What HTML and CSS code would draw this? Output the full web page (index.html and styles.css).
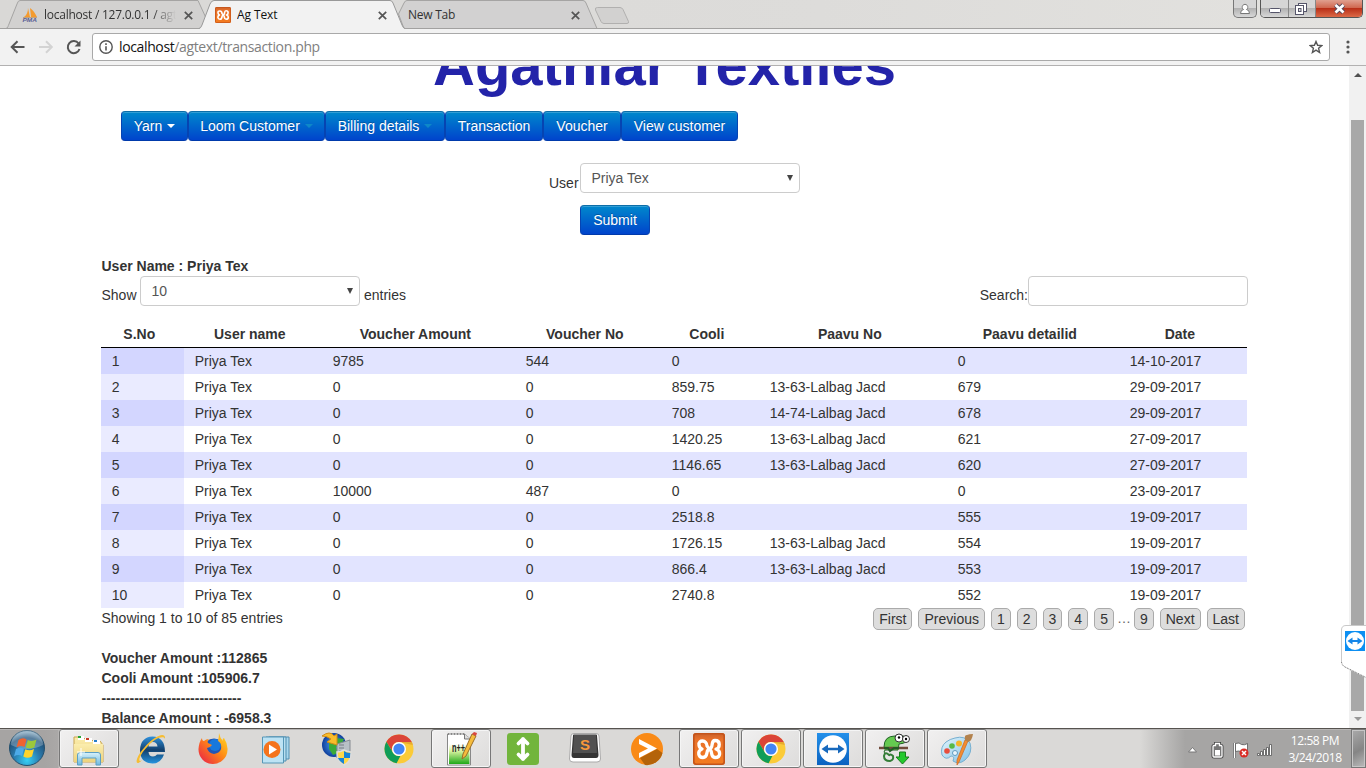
FILE: index.html
```html
<!DOCTYPE html>
<html lang="en">
<head>
<meta charset="utf-8">
<title>Ag Text</title>
<link rel="stylesheet" href="styles.css">
</head>
<body>
<svg width="0" height="0" class="defs">
  <defs>
    <linearGradient id="orange" x1="0" y1="0" x2="0" y2="1"><stop offset="0" stop-color="#c9602a"/><stop offset=".2" stop-color="#e8712a"/><stop offset="1" stop-color="#f47c20"/></linearGradient>
    <radialGradient id="orb" cx=".5" cy=".85" r=".8"><stop offset="0" stop-color="#35d0f5"/><stop offset=".45" stop-color="#2a7db0"/><stop offset=".8" stop-color="#22547c"/><stop offset="1" stop-color="#7fa4bd"/></radialGradient>
    <linearGradient id="folder" x1="0" y1="0" x2="0" y2="1"><stop offset="0" stop-color="#fbedae"/><stop offset="1" stop-color="#edd27c"/></linearGradient>
    <linearGradient id="glass" x1="0" y1="0" x2="0" y2="1"><stop offset="0" stop-color="#d7f1fb"/><stop offset="1" stop-color="#6fb9de"/></linearGradient>
    <linearGradient id="ieblue" x1="0" y1="0" x2="0" y2="1"><stop offset="0" stop-color="#2e91dd"/><stop offset=".5" stop-color="#123f6c"/><stop offset="1" stop-color="#2494e0"/></linearGradient>
    <linearGradient id="fox" x1="1" y1="0" x2="0" y2="1"><stop offset="0" stop-color="#ffe226"/><stop offset=".45" stop-color="#ff8a16"/><stop offset="1" stop-color="#e8174c"/></linearGradient>
    <radialGradient id="globe"><stop offset="0" stop-color="#4aa5f3"/><stop offset="1" stop-color="#103f9d"/></radialGradient>
    <linearGradient id="npp" x1="0" y1="0" x2="0" y2="1"><stop offset="0" stop-color="#fff"/><stop offset=".35" stop-color="#d9f3a0"/><stop offset="1" stop-color="#1fa818"/></linearGradient>
    <linearGradient id="tv" x1="0" y1="0" x2="0" y2="1"><stop offset="0" stop-color="#2390ea"/><stop offset="1" stop-color="#0b62c0"/></linearGradient>
    <linearGradient id="palette" x1="0" y1="0" x2="1" y2="1"><stop offset="0" stop-color="#e2f5fd"/><stop offset="1" stop-color="#82c1e6"/></linearGradient>
    <symbol id="chrome" viewBox="0 0 40 40">
      <circle cx="20" cy="20" r="14.500" fill="#fbcb38"/>
      <path d="M7.400 12.800A14.500 14.500 0 0 1 32.800 13H20a7 7 0 0 0-6.100 10.500Z" fill="#db4437"/>
      <path d="M7.400 12.800 13.900 23.500A7 7 0 0 0 21.500 26.800L17.600 34.300A14.500 14.500 0 0 1 7.400 12.800Z" fill="#0f9d58"/>
      <path d="M20 13H32.900A14.500 14.500 0 0 1 33.800 16L20 13Z" fill="#e8aa2d"/>
      <circle cx="20" cy="20" r="7" fill="#fff"/><circle cx="20" cy="20" r="5.600" fill="#4285f4"/>
    </symbol>
    <symbol id="xampp" viewBox="0 0 32 32">
      <rect width="32" height="32" rx="3" fill="url(#orange)"/>
      <rect x=".8" y=".8" width="30.400" height="30.400" rx="2.500" fill="none" stroke="#c4541a" stroke-width="1.600"/>
      <path d="M14 13C14 6.500 5 6.500 6 12 6.300 15 9 16 9 16 4 18 5 24.500 10 24.500 15 24.500 13 19 15 17L18 15C20 13 18 7.500 22 7.500 28 7.500 27 15 23 16 28 17.500 28 24.500 22 24.500 18 24.500 19 20 18 18Z" fill="none" stroke="#fff" stroke-width="3.300" stroke-linejoin="round"/>
    </symbol>
    <symbol id="arrows" viewBox="0 0 32 32">
      <circle cx="16" cy="16" r="13.800" fill="#fff"/>
      <path d="M4.500 16l6.500-4.500v3.300h10v-3.300l6.500 4.500-6.500 4.500v-3.300H11v3.300Z" fill="#1769bd"/>
    </symbol>
  </defs>
</svg>

<header class="titlebar">
  <svg class="tab-shapes" width="640" height="29" viewBox="0 0 640 29">
    <path d="M6 28.500C8 28 8 26 9 24L17 4Q18 .5 20 .5H198L206 18 202 28.500Z" fill="#d2d1d0" stroke="#a5a4a3"/>
    <path d="M398.500 14 404 3Q405 .5 407 .5H583Q585 .5 586 3L597 28.500H404Z" fill="#d2d1d1" stroke="#a5a4a3"/>
    <path d="M0 28.500H640" stroke="#a2a1a0"/>
    <path d="M199 29Q201 28 202 25L210 4Q211.500 .5 214 .5H390Q392 .5 393 3L402 25Q403 28 405 29Z" fill="#f2f2f2"/>
    <path d="M199 28.500Q201 28 202 25L210 4Q211.500 .5 214 .5H390Q392 .5 393 3L402 25Q403 28 405 28.500" fill="none" stroke="#999"/>
    <path d="M597.500 7.500H620Q622 7.500 623 9.500L628.500 21.500Q629 23.500 627 23.500H604Q602 23.500 601 21.500L595.500 10Q594.500 7.500 597.500 7.500Z" fill="#d2d1d0" stroke="#b1b0af"/>
  </svg>
  <div class="tab tab-pma">
    <svg class="pma" width="16" height="17" viewBox="0 0 16 17"><path d="M2 10C5 8 6 4 6 1l2 9ZM8 1c3 2 5 5 7 9H9Z" fill="#f49b2f"/><path d="M1 10.500H15" stroke="#c5a37b"/><text x=".5" y="15.300" font-size="6" font-weight="bold" font-style="italic" textLength="14.500" lengthAdjust="spacingAndGlyphs" fill="#5b5f95">PMA</text></svg>
    <span class="tab-title fade">localhost / 127.0.0.1 / agt</span>
    <svg class="x" width="9" height="9" viewBox="0 0 9 9"><path d="M.8.8l7.400 7.400M8.200.8.800 8.200"/></svg>
  </div>
  <div class="tab tab-active">
    <svg width="16" height="16"><use href="#xampp"/></svg>
    <span class="tab-title">Ag Text</span>
    <svg class="x" width="9" height="9" viewBox="0 0 9 9"><path d="M.8.8l7.400 7.400M8.200.8.800 8.200"/></svg>
  </div>
  <div class="tab tab-new">
    <span class="tab-title">New Tab</span>
    <svg class="x" width="9" height="9" viewBox="0 0 9 9"><path d="M.8.8l7.400 7.400M8.200.8.800 8.200"/></svg>
  </div>
  <div class="window-buttons">
    <div class="wb user"><svg width="12" height="12" viewBox="0 0 12 12"><path d="M1.500 10.500Q1.500 7 4.500 6.500A2.800 2.800 0 1 1 7.500 6.500Q10.500 7 10.500 10.500Z" fill="#fff" stroke="#777"/></svg></div>
    <div class="wb-group">
      <div class="wb min"><svg width="12" height="6"><rect x=".5" y=".5" width="11" height="4" rx="1" fill="#fff" stroke="#55556a"/></svg></div>
      <div class="wb max"><svg width="12" height="12" viewBox="0 0 12 12"><rect x="3.500" y=".5" width="8" height="8" fill="#fff" stroke="#55556a"/><rect x=".5" y="2.500" width="8" height="9" fill="#fff" stroke="#55556a"/><rect x="3.500" y="5.500" width="2.500" height="3" fill="#ddd" stroke="#55556a"/></svg></div>
      <div class="wb close"><svg width="13" height="11" viewBox="0 0 13 11"><path d="M2.500 2l8 7.500M10.500 2l-8 7.500" stroke="#55485a" stroke-width="4.500"/><path d="M2.500 2l8 7.500M10.500 2l-8 7.500" stroke="#fff" stroke-width="2.700"/></svg></div>
    </div>
  </div>
</header>

<div class="toolbar">
  <svg class="nav" width="72" height="16" viewBox="0 0 72 16" fill="none" stroke-width="2">
    <path d="M14.500 8H2M7.500 2.200 1.700 8l5.800 5.800" stroke="#555"/>
    <path d="M29 8h12.500M36 2.200 41.800 8 36 13.800" stroke="#d3d3d3"/>
    <path d="M68.600 4.500A6 6 0 1 0 69.500 10" stroke="#555"/><path d="M70.500 1.500V7.500H64.500Z" fill="#555"/>
  </svg>
  <div class="omnibox">
    <svg width="14" height="14" viewBox="0 0 14 14"><circle cx="7" cy="7" r="6.200" fill="none" stroke="#555" stroke-width="1.400"/><path d="M7 6.200V10.500M7 3.300V4.900" stroke="#555" stroke-width="1.600"/></svg>
    <span class="url">localhost<span>/agtext/transaction.php</span></span>
    <svg class="star" width="14" height="14" viewBox="0 0 14 14"><path d="M7 1.500 8.600 5.300 12.800 5.600 9.600 8.300 10.600 12.500 7 10.200 3.400 12.500 4.400 8.300 1.200 5.600 5.400 5.300Z" fill="none" stroke="#555" stroke-width="1.400"/></svg>
  </div>
  <svg class="dots" width="4" height="14" viewBox="0 0 4 14" fill="#555"><circle cx="2" cy="2" r="1.600"/><circle cx="2" cy="7" r="1.600"/><circle cx="2" cy="12" r="1.600"/></svg>
</div>

<div class="viewport">
  <main class="page">
    <h1 class="brand">Agathiar Textiles</h1>
    <nav class="menu">
      <a class="btn w-yarn">Yarn<i class="caret"></i></a><a class="btn w-loom">Loom Customer<i class="caret dim"></i></a><a class="btn w-bill">Billing details<i class="caret dim"></i></a><a class="btn w-trans">Transaction</a><a class="btn w-vouch">Voucher</a><a class="btn w-view">View customer</a>
    </nav>
    <form class="user-form">
      <label>User</label>
      <div class="select">Priya Tex<i class="tri"></i></div>
      <button type="button" class="btn submit">Submit</button>
    </form>
    <section class="report">
      <b class="user-name">User Name : Priya Tex</b>
      <div class="controls">
        <span class="show">Show</span><div class="select">10<i class="tri"></i></div><span class="entries">entries</span>
        <span class="search">Search:</span><input class="field" type="text">
      </div>
      <table class="grid">
        <colgroup><col class="c1"><col class="c2"><col class="c3"><col class="c4"><col class="c5"><col class="c6"><col class="c7"><col class="c8"></colgroup>
        <thead><tr><th>S.No</th><th>User name</th><th>Voucher Amount</th><th>Voucher No</th><th>Cooli</th><th>Paavu No</th><th>Paavu detailid</th><th>Date</th></tr></thead>
        <tbody>
          <tr><td>1</td><td>Priya Tex</td><td>9785</td><td>544</td><td>0</td><td></td><td>0</td><td>14-10-2017</td></tr>
          <tr><td>2</td><td>Priya Tex</td><td>0</td><td>0</td><td>859.75</td><td>13-63-Lalbag Jacd</td><td>679</td><td>29-09-2017</td></tr>
          <tr><td>3</td><td>Priya Tex</td><td>0</td><td>0</td><td>708</td><td>14-74-Lalbag Jacd</td><td>678</td><td>29-09-2017</td></tr>
          <tr><td>4</td><td>Priya Tex</td><td>0</td><td>0</td><td>1420.25</td><td>13-63-Lalbag Jacd</td><td>621</td><td>27-09-2017</td></tr>
          <tr><td>5</td><td>Priya Tex</td><td>0</td><td>0</td><td>1146.65</td><td>13-63-Lalbag Jacd</td><td>620</td><td>27-09-2017</td></tr>
          <tr><td>6</td><td>Priya Tex</td><td>10000</td><td>487</td><td>0</td><td></td><td>0</td><td>23-09-2017</td></tr>
          <tr><td>7</td><td>Priya Tex</td><td>0</td><td>0</td><td>2518.8</td><td></td><td>555</td><td>19-09-2017</td></tr>
          <tr><td>8</td><td>Priya Tex</td><td>0</td><td>0</td><td>1726.15</td><td>13-63-Lalbag Jacd</td><td>554</td><td>19-09-2017</td></tr>
          <tr><td>9</td><td>Priya Tex</td><td>0</td><td>0</td><td>866.4</td><td>13-63-Lalbag Jacd</td><td>553</td><td>19-09-2017</td></tr>
          <tr><td>10</td><td>Priya Tex</td><td>0</td><td>0</td><td>2740.8</td><td></td><td>552</td><td>19-09-2017</td></tr>
        </tbody>
      </table>
      <div class="table-foot">
        <span>Showing 1 to 10 of 85 entries</span>
        <div class="pager"><a>First</a><a>Previous</a><a>1</a><a>2</a><a>3</a><a>4</a><a>5</a><span>…</span><a>9</a><a>Next</a><a>Last</a></div>
      </div>
      <div class="totals">
        <div>Voucher Amount :112865</div>
        <div>Cooli Amount :105906.7</div>
        <div>------------------------------</div>
        <div>Balance Amount : -6958.3</div>
      </div>
    </section>
  </main>
  <div class="scrollbar"><i class="arrow up"></i><div class="thumb"></div><i class="arrow down"></i></div>
  <svg class="tv-tab" width="25" height="54" viewBox="0 0 25 54"><path d="M26 .5H5Q.5.5.5 5V37Q.5 40 4 42L26 53Z" fill="#fff" stroke="#c9c9c9"/><path d="M.5 37Q.5 40 4 42L26 53" fill="none" stroke="#777" stroke-dasharray="1 2"/><rect x="4" y="6" width="20" height="20" fill="#0d8ff2"/><circle cx="14" cy="16" r="9" fill="#fff"/><path d="M6.500 16l5-3.500v2.500h5v-2.500l5 3.500-5 3.500V17h-5v2.500Z" fill="#1686e8"/></svg>
</div>

<footer class="taskbar">
  <div class="start"><svg width="40" height="38" viewBox="0 0 40 38"><circle cx="20" cy="19" r="17.500" fill="url(#orb)" stroke="#24506e"/><path d="M4 16a16 15 0 0 1 32 0Q20 24 4 16Z" fill="#fff" opacity=".25"/><path d="M11.500 11Q15.500 8 19.500 10.500L17.500 18Q13.500 16 9.500 18.500Z" fill="#ef6330"/><path d="M20.800 11Q25 13 29.500 10.500L27.300 18.500Q23 20.500 18.700 18.500Z" fill="#9bc83c"/><path d="M9 20Q13 17.500 17 19.700L15 27Q11 25 7 27.500Z" fill="#4daae8"/><path d="M18.300 20.200Q22.500 22.500 27 20L25 27.500Q20.500 30 16.300 27.500Z" fill="#fed42c"/></svg></div>
  <div class="tasks">
    <div class="task open"><svg width="40" height="38" viewBox="0 0 40 38"><path d="M5 9V7h9l2 2h6l2 2h7l3 4v17H5Z" fill="url(#folder)" stroke="#c9a44f"/><path d="M9 8h6M16 10h7M24 12h7" stroke="#fff" stroke-width="4"/><path d="M9 7h3" stroke="#26a536" stroke-width="2"/><path d="M17 9h3" stroke="#c83b28" stroke-width="2"/><path d="M25 11h3" stroke="#287ec9" stroke-width="2"/><path d="M5 14H34V32H5Z" fill="url(#folder)"/><path d="M8.500 35V25Q8.500 22.500 11 22.500H29Q31.500 22.500 31.500 25V35H27V28H13V35Z" fill="url(#glass)" stroke="#5b9fc5"/><path d="M12 18v8M8 22h8" stroke="#fff"/></svg></div>
    <div class="task"><svg width="40" height="38" viewBox="0 0 40 38"><path d="M34 22H17.500Q18 26.500 22 26.500 24.500 26.500 26 24.500H33Q30 33.500 21.500 33.500 9 33 9 20 9.500 7 21.500 6.500 34 7 34 22ZM17.500 16.500H26.500Q26 12 22 12 18 12 17.500 16.500Z" fill="url(#ieblue)" fill-rule="evenodd"/><path d="M11 30C4 38 3 29 13 18 23 6 35 1 34 9 33 5 24 8 17 16 8 25 6 34 11 30Z" fill="#f6bd32"/></svg></div>
    <div class="task"><svg width="40" height="38" viewBox="0 0 40 38"><circle cx="21" cy="19" r="10.500" fill="#2356b5"/><circle cx="22" cy="15" r="6" fill="#1778dc"/><path d="M26 3Q27 8 30 11 29 9 31 8 35 14 34.500 20A14.500 14.500 0 0 1 5.500 19Q6 12 9 8 9 11 11 11 13 9 16 9 14 11 15 13L19 15Q17 18 14 18 15 23 21 24 27 23 28 19 29 13 25 11 26 7 26 3Z" fill="url(#fox)"/></svg></div>
    <div class="task"><svg width="40" height="38" viewBox="0 0 40 38"><path d="M14 7h20v22H14Z" fill="#a8d7ed" stroke="#508fb0"/><path d="M11 7h20v24H11Z" fill="#b8dff0" stroke="#508fb0"/><path d="M7.500 7h21v26h-21Z" fill="#bde3f4" stroke="#5697b7"/><circle cx="17" cy="19.500" r="8.500" fill="#f4741c"/><path d="M14 14.500l8 5-8 5Z" fill="#fff"/></svg></div>
    <div class="task"><svg width="40" height="38" viewBox="0 0 40 38"><circle cx="17" cy="15" r="12" fill="url(#globe)"/><path d="M12 12l7-4 8 1-3 6-5 2 2 6-5 2-4-6Z" fill="#3aaa3a"/><path d="M20 14l13-4v18H20Z" fill="#b8c0c7" stroke="#858c92"/><path d="M22 15h5M22 18h5M22 21h5" stroke="#747d85"/><path d="M5 6Q13 0 17 6L20 4V15L10 12 14 9Q10 6 5 6Z" fill="#f8bd2b" stroke="#d28b16"/><path d="M27 20q4 2 7 2 0 10-7 13-7-3-7-13 3 0 7-2Z" fill="#ffd84a" stroke="#ddd" stroke-width="1.500"/><path d="M27 21v7h6q0-3 .3-5-4 0-6.300-2ZM27 28v6q-5-3-6-6Z" fill="#1884d8"/></svg></div>
    <div class="task"><svg width="40" height="40"><use href="#chrome"/></svg></div>
    <div class="task open"><svg width="40" height="38" viewBox="0 0 40 38"><path d="M6.500 4h17l6 5v26h-23Z" fill="#fff" stroke="#888"/><path d="M8 14h20.500v20H8Z" fill="url(#npp)"/><path d="M7 4h17" stroke="#555" stroke-dasharray="1 2"/><path d="M23.500 4v5h6" fill="#ddd" stroke="#777"/><text x="11" y="22" font-family="Liberation Sans" font-weight="bold" font-size="12" textLength="13" lengthAdjust="spacingAndGlyphs" fill="#222">n++</text><path d="M31 4l4 2-10 20-4 3 1-5Z" fill="#f5bc3d" stroke="#9b6d26"/><path d="M31 4l4 2 1-3-3-1Z" fill="#d9473e"/></svg></div>
    <div class="task"><svg width="40" height="38" viewBox="0 0 40 38"><rect x="4" y="3" width="32" height="32" rx="3.500" fill="#72b53c"/><path d="M20 9v20M15.500 13.500l4.500-4.500 4.500 4.500M15.500 24.500l4.500 4.500 4.500-4.500" fill="none" stroke="#fff" stroke-width="3.800" stroke-linecap="round" stroke-linejoin="round"/></svg></div>
    <div class="task"><svg width="40" height="38" viewBox="0 0 40 38"><path d="M6 6Q6 3.500 9 3.500H31Q34 3.500 34 6L35.500 29Q35.500 32 32 32H8Q4.500 32 4.500 29Z" fill="#fff" stroke="#aaa"/><path d="M8 5.500Q8 4.500 9 4.500H31Q32 4.500 32 5.500L33.500 25Q33.500 28 31 28H9Q6.500 28 6.500 25Z" fill="#333"/><path d="M9 5h22l1 18H8Z" fill="#505050"/><text x="15" y="19.500" font-family="Liberation Sans" font-size="15" font-weight="bold" fill="#f7983a">S</text></svg></div>
    <div class="task"><svg width="40" height="38" viewBox="0 0 40 38"><circle cx="20" cy="19" r="16" fill="#f98a16"/><path d="M30 19l5.500 4A16 16 0 0 1 18 35L13 28Z" fill="#b46309"/><path d="M12 9l18 9.500L12 28v-5l9-4.500-9-4.500Z" fill="#fff"/></svg></div>
    <div class="task open"><svg width="32" height="32"><use href="#xampp"/></svg></div>
    <div class="task open"><svg width="40" height="40"><use href="#chrome"/></svg></div>
    <div class="task open"><svg width="32" height="32" viewBox="0 0 32 32"><rect width="32" height="32" fill="url(#tv)"/><use href="#arrows"/></svg></div>
    <div class="task open"><svg width="40" height="38" viewBox="0 0 40 38"><path d="M9 17Q9 6 20 6h8q5 1 5 5-5 3-9 3l-1 6H11q-3 0-1 4" fill="#65ca50" stroke="#216326"/><path d="M14 25q-4-4-5 1 0 5 6 5 4-1 3-5-3-3-4 0" fill="none" stroke="#337d36" stroke-width="2"/><path d="M4 18h29" stroke="#704b3b" stroke-width="2.500"/><path d="M9 18h4l2 3 4-3h5" stroke="#225c25" stroke-width="2" fill="none"/><circle cx="24" cy="8" r="4" fill="#fff" stroke="#333"/><circle cx="31" cy="9" r="3.500" fill="#fff" stroke="#333"/><circle cx="24" cy="7.500" r="1.200"/><circle cx="31" cy="9" r="1.200"/><path d="M24.500 22h6v5h3.500l-6.500 7-6.500-7h3.500Z" fill="#23c92c" stroke="#187c1b"/></svg></div>
    <div class="task open"><svg width="40" height="38" viewBox="0 0 40 38"><path d="M18 8Q28 5 33 13 36 23 28 30 22 35 16 31 18 26 14 26 9 31 5 25 3 17 9 12 13 9 18 8Z" fill="url(#palette)" stroke="#76afd0"/><circle cx="10" cy="21" r="2.800" fill="#e84e3d"/><circle cx="15" cy="16" r="2.800" fill="#58b947"/><circle cx="22" cy="13.500" r="3" fill="#f5b52a"/><circle cx="18" cy="23" r="2.500" fill="#eaf5fb" stroke="#629bc0"/><path d="M31 11l-9 21-2 3 0-5L28 10Z" fill="#f38d31" stroke="#c86521" stroke-width=".7"/><path d="M28 10q-1-5 2-5 2-1 6-1-1 7-5 8Z" fill="#b3824d"/></svg></div>
  </div>
  <div class="tray">
    <svg width="86" height="20" viewBox="0 0 86 20"><path d="M1.500 12 5.500 7.500l4 4.500Z" fill="#fff" stroke="#777"/><path d="M28.500 3.500h4v2H34q1 0 1 1V16q0 1-1 1h-7q-1 0-1-1V6.500q0-1 1-1h1.500Z" fill="none" stroke="#444" stroke-width="3"/><path d="M28.500 3.500h4v2H34q1 0 1 1V16q0 1-1 1h-7q-1 0-1-1V6.500q0-1 1-1h1.500Z" fill="#777" stroke="#fff" stroke-width="1.300"/><rect x="28" y="10" width="5" height="5.500" fill="#fff"/><path d="M47.500 3v15" stroke="#555" stroke-width="3"/><path d="M47.500 3v15" stroke="#fff" stroke-width="1.500"/><path d="M48.500 3.500q4-1.500 6 1 3 1 6-1v8q-4 2-6 0-3-1-6 0Z" fill="#fff" stroke="#555" stroke-width=".8"/><circle cx="57" cy="13" r="4.500" fill="#d92c25"/><path d="M55 11l4 4M59 11l-4 4" stroke="#fff" stroke-width="1.500"/><path d="M70.500 15.500v-2h2v2ZM73.500 15.500v-4h2v4ZM76.500 15.500v-6h2v6ZM79.500 15.500v-8h2v8ZM82.500 15.500v-11h2v11Z" fill="#fff" stroke="#555" stroke-width=".8"/></svg>
    <div class="clock"><span>12:58 PM</span><span>3/24/2018</span></div>
    <div class="peek"></div>
  </div>
</footer>
</body>
</html>
```
FILE: styles.css
```css
* { box-sizing: border-box; }
body { margin: 0; width: 1366px; height: 768px; overflow: hidden; display: flex; flex-direction: column; background: #fff; font: 14px/20px "Liberation Sans", Arial, sans-serif; color: #333; }
.defs { position: absolute; }

/* window title bar and tabs */
.titlebar { position: relative; flex: none; height: 29px; display: flex; background: linear-gradient(90deg, #d9d8d6, #dddcda 60%, #e3e2df); border-bottom: 1px solid #a2a1a0; font: 12px/16px "Open Sans", "Noto Sans", sans-serif; }
.tab-shapes { position: absolute; left: 0; top: 0; }
.tab { position: relative; display: flex; align-items: center; height: 30px; flex: none; }
.tab-title { flex: 1; margin-left: 6px; white-space: nowrap; overflow: hidden; letter-spacing: -.25px; color: #333; }
.pma { overflow: visible; font-family: "Liberation Sans", sans-serif; }
.tab-active .tab-title { color: #111; letter-spacing: -.1px; }
.fade { -webkit-mask-image: linear-gradient(90deg, #000 82%, transparent); }
.x { fill: none; stroke: #555; stroke-width: 1.7; }
.tab-pma { margin-left: 22px; width: 171px; }
.tab-pma .tab-title { margin-right: 8px; }
.tab-active { margin-left: 22px; width: 172px; }
.tab-new { margin-left: 21px; width: 172px; }
.tab-new .tab-title { margin-left: 0; }
.window-buttons { position: relative; margin-left: auto; margin-right: 3px; display: flex; gap: 3px; height: 18px; }
.wb { display: flex; align-items: center; justify-content: center; height: 17px; background: linear-gradient(#d6d6d6 0 45%, #b2b2b2 50%, #d8d8d8); }
.user { width: 24px; height: 18px; border: 1px solid #777; border-top: 0; border-radius: 0 0 5px 5px; }
.wb-group { display: flex; height: 18px; border: 1px solid #555; border-top: 0; border-radius: 0 0 5px 5px; overflow: hidden; }
.min { width: 28px; border-right: 1px solid #888; padding-top: 4px; }
.max { width: 27px; border-right: 1px solid #888; padding-right: 2px; }
.close { width: 46px; background: linear-gradient(#e0a08f 0, #d06850 45%, #b93018 50%, #dc6a48); }

/* address bar */
.toolbar { flex: none; height: 37px; display: flex; align-items: center; background: #f2f2f2; border-bottom: 1px solid #b2b1b1; }
.nav { margin-left: 10px; }
.omnibox { display: flex; align-items: center; width: 1238px; height: 28px; margin-left: 10px; padding: 0 6px; background: #fff; border: 1px solid #a9a9a9; border-radius: 3px; }
.url { margin-left: 6px; font: 14px/20px "Open Sans", "Noto Sans", sans-serif; letter-spacing: -.37px; color: #111; }
.url span { color: #808080; }
.star { margin-left: auto; }
.dots { margin-left: 16px; }

/* page */
.viewport { position: relative; flex: none; height: 662px; display: flex; overflow: hidden; }
.page { width: 1349px; height: 662px; overflow: hidden; }
.brand { margin: -31px 0 0 433px; height: 76px; font-size: 58px; line-height: 60px; color: #2323a9; white-space: nowrap; }
.menu { display: flex; margin-left: 121px; }
.btn { display: flex; align-items: center; justify-content: center; height: 30px; font: 14px/20px "Liberation Sans", Arial, sans-serif; color: #fff; text-shadow: 0 -1px 0 rgba(0,0,0,.25); background: linear-gradient(#0088cc, #0044cc); border: 1px solid; border-color: #0d6ea8 #0644b2 #003aab; border-radius: 4px; box-shadow: inset 0 1px 0 rgba(255,255,255,.2); white-space: nowrap; }
.w-yarn { width: 67px; } .w-loom { width: 137px; } .w-bill { width: 120px; } .w-trans { width: 98px; } .w-vouch { width: 78px; } .w-view { width: 117px; }
.caret { margin-left: 5px; border: 4px solid transparent; border-top-color: #fff; border-bottom: 0; }
.dim { border-top-color: #0e88c8; }
.user-form { display: grid; grid-template-columns: 31px 220px; margin: 22px 0 0 549px; row-gap: 12px; }
.user-form label { padding-top: 10px; height: 30px; }
.submit { grid-column: 2; width: 70px; }
.select { position: relative; width: 220px; height: 30px; padding: 4px 10.5px; border: 1px solid #ccc; border-radius: 4px; background: #fff; color: #555; }
.tri { position: absolute; right: 6px; top: 11px; border: 3px solid transparent; border-top: 6px solid #444; border-bottom: 0; }
.report { margin: 21px 0 0 101px; width: 1147px; }
.user-name { display: block; height: 20px; padding-left: .5px; }
.controls { display: flex; height: 45px; }
.show { width: 39px; padding: 9px 0 0 .5px; } .entries { margin-left: 4px; padding-top: 9px; }
.search { margin-left: auto; padding-top: 9px; }
.field { width: 220px; height: 30px; border: 1px solid #ccc; border-radius: 4px; padding: 4px 6px; }
.grid { width: 1146px; table-layout: fixed; border-collapse: separate; border-spacing: 0; }
.c1 { width: 83px; } .c2 { width: 138px; } .c3 { width: 193px; } .c4 { width: 146px; } .c5 { width: 98px; } .c6 { width: 188px; } .c7 { width: 172px; } .c8 { width: 128px; }
.grid th { height: 27px; padding: 3px 17.2px 3px 10.8px; border-bottom: 1px solid #000; text-align: center; white-space: nowrap; }
.grid td { height: 26px; padding: 3px 9px 3px 10.7px; }
.grid tbody tr:nth-child(odd) { background: #e2e4ff; }
.grid tbody tr:nth-child(odd) td:first-child { background: #d3d6ff; }
.grid tbody tr:nth-child(even) td:first-child { background: #eaebff; }
.table-foot { display: flex; justify-content: space-between; height: 40px; padding-left: .5px; }
.pager { display: flex; height: 22px; margin-right: 3px; }
.pager a { height: 22px; padding: 0 5px; margin-left: 6px; border: 1px solid #aaa; border-radius: 5px; background: #ddd; }
.pager span { margin: 0 -2px 0 3px; width: 13px; color: #666; }
.totals { font-weight: bold; padding-left: .5px; }
.scrollbar { width: 17px; background: #f1f1f1; display: flex; flex-direction: column; align-items: center; padding: 7px 0; }
.arrow { border: 4px solid transparent; }
.up { border-top: 0; border-bottom-color: #505050; }
.thumb { width: 13px; height: 591px; margin-top: 43px; background: #a8a8a8; }
.down { margin-top: 6px; border-bottom: 0; border-top-color: #999; }
.tv-tab { position: absolute; right: 0; top: 559px; }

/* taskbar */
.taskbar { flex: none; display: flex; height: 40px; border-top: 1px solid #56534f; background: linear-gradient(90deg, #a6a4a3 0 45px, #aaa8a7 58px, #dad9d7 60px 1140px, #a6a5a4 1185px); box-shadow: inset 0 1px 0 #b7b5b4; }
.start { width: 59px; padding-left: 7px; }
.tasks { display: flex; gap: 2px; }
.task { width: 60px; height: 39px; display: flex; align-items: center; justify-content: center; }
.open { border: 1px solid #777; border-radius: 3px; background: linear-gradient(135deg, #f1f0f0, #dddcdb); box-shadow: inset 0 0 0 1px #f5f5f5; }
.tray { margin-left: auto; display: flex; }
.tray > svg { margin-top: 11px; }
.clock { width: 72px; margin-left: 6px; padding-top: 3px; display: flex; flex-direction: column; align-items: center; font: 12px/17px "Open Sans", "Noto Sans", sans-serif; letter-spacing: -.4px; color: #fff; }
.peek { width: 15px; height: 39px; border: 1px solid #777; background: linear-gradient(150deg, #aaa, #858585 55%, #bbb); box-shadow: inset 0 0 0 1px #c6c6c6; }
```
